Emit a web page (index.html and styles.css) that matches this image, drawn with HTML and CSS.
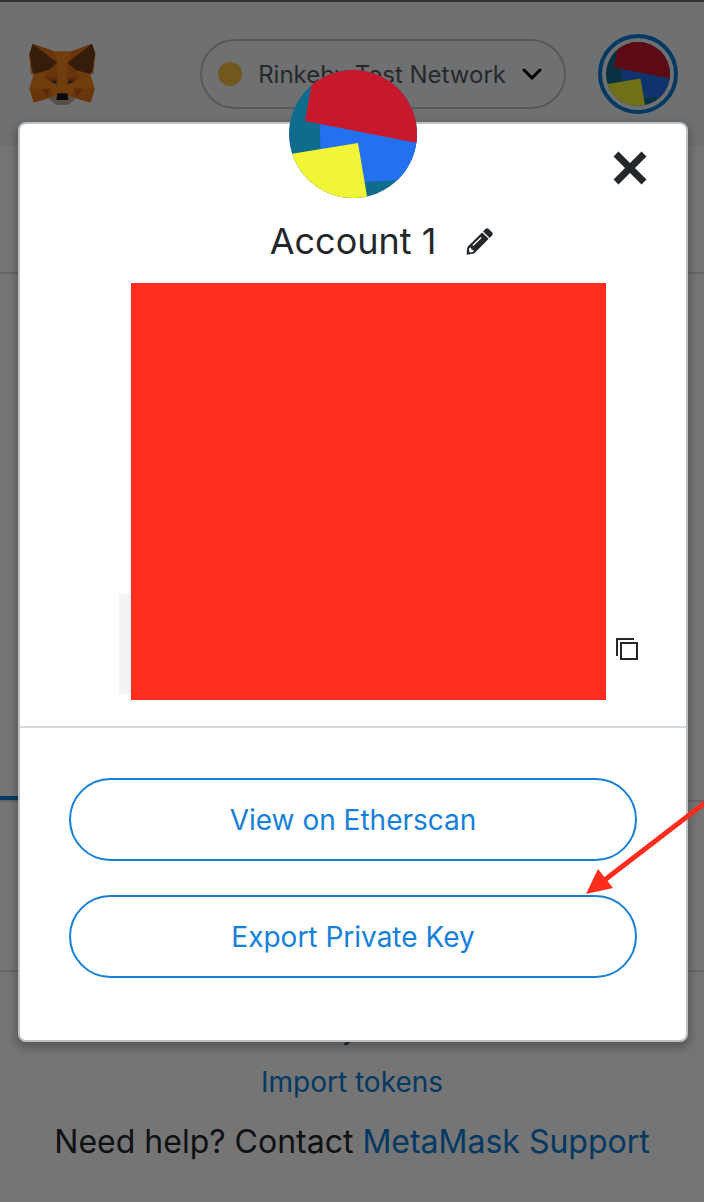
FILE: index.html
```html
<!DOCTYPE html>
<html lang="en">
<head>
<meta charset="utf-8">
<meta name="viewport" content="width=device-width, initial-scale=1">
<title>MetaMask</title>
<link rel="stylesheet" href="styles.css">
</head>
<body>
<svg class="defs" aria-hidden="true">
  <clipPath id="round"><circle cx="64" cy="64" r="64"/></clipPath>
  <symbol id="jazzicon" viewBox="0 0 128 128">
    <g clip-path="url(#round)">
      <path fill="#0e6c8c" d="M0 0h128v128H0z"/>
      <path fill="#2370f0" d="M30 40 128 60v49L33 114z"/>
      <path fill="#c8192c" d="M27-10 16 51l122 24V-10z"/>
      <path fill="#f1f536" d="M-10 86 69 73l11 65H-10z"/>
    </g>
  </symbol>
</svg>

<div class="page">
  <header class="header">
    <svg class="fox" viewBox="88 128 201 189" role="img" aria-label="MetaMask">
      <path fill="#f6851b" d="M99 130 162 153h54l61-23 10 33-6 58-9 1 13 43-12 42-49-14-20 19h-32l-22-19-48 14-13-42 13-43-8-1-6-58z"/>
      <path fill="#e4761b" d="M99 130 162 153l12 34zM277 130 216 153l-13 34zM148 209l26-22-1 46-38-3zM228 209l-25-22 1 46 37-3zM91 265h61l10 20-14 8-45 13zM285 265h-61l-10 20 14 8 45 13z"/>
      <path fill="#763d16" d="M99 130 173 187 148 209 103 221 97 212 99 207 94 203 97 200 93 195 95 190 90 160zM277 130 203 187 228 209 272 221 279 212 277 207 282 203 279 200 283 195 281 190 287 160z"/>
      <path fill="#c45a20" d="M135 230 173 233 175 251 151 243zM241 230 203 233 201 251 225 243zM128 265h24l-8 26zM248 265h-24l8 26z"/>
      <path fill="#233447" d="M155 245l11-5 5 11zM221 245l-11-5-5 11z"/>
      <path fill="#c0ad9e" d="M148 293l24-8h32l24 8-6 8-18 13h-32l-19-13z"/>
      <path fill="#161616" d="M173 279h30l3 20h-36z"/>
    </svg>
    <button class="network" type="button">
      <span class="network-dot"></span>
      <span class="network-name">Rinkeby Test Network</span>
      <svg class="chevron" viewBox="0 0 20 12" aria-hidden="true"><path d="M2 2l8 8 8-8"/></svg>
    </button>
    <button class="account" type="button" aria-label="My accounts"><svg class="account-icon"><use href="#jazzicon"/></svg></button>
  </header>
  <div class="menu-bar"></div>
  <div class="overview"><div class="tab-active"></div></div>
  <div class="token-row"></div>
  <footer class="footer">
    <p class="hint">Don't see your token?</p>
    <a class="import" href="#">Import tokens</a>
    <p class="help">Need help? Contact <a href="#">MetaMask Support</a></p>
  </footer>
</div>

<div class="overlay">
  <div class="modal" role="dialog" aria-modal="true" aria-labelledby="account-name">
    <button class="close" type="button" aria-label="Close"><svg viewBox="0 0 34 34"><path d="M3 3l28 28M31 3 3 31"/></svg></button>
    <svg class="avatar" aria-hidden="true"><use href="#jazzicon"/></svg>
    <div class="title">
      <h1 id="account-name">Account 1</h1>
      <button class="edit" type="button" aria-label="Edit account name">
        <svg viewBox="650 52 82 82">
          <path fill="#24272a" d="M699 66 719 85 677 127Q673 131 666 131L652 133 653 117Q653 111 657 107zM702 63 709 55Q714 51 719 55L729 65Q734 70 729 75L722 82z"/>
          <path fill="none" stroke="#fff" stroke-width="4" d="M671 105 696 81"/>
          <path fill="#fff" d="M660 113l5-2 2 7 6 1-1 5-8 3-5-5z"/>
        </svg>
      </button>
    </div>
    <div class="details">
      <div class="address"></div>
      <div class="redaction"></div>
      <button class="copy" type="button" aria-label="Copy address"><svg viewBox="0 0 22 22"><path d="M1 18V1h17M5 5h16v16H5z"/></svg></button>
    </div>
    <div class="actions">
      <button class="action" type="button">View on Etherscan</button>
      <button class="action" type="button">Export Private Key</button>
    </div>
  </div>
  <svg class="arrow" viewBox="586 798 118 96" aria-hidden="true">
    <path fill="none" stroke="#fc2d1f" stroke-width="5" d="M710 799 602 882"/>
    <path fill="#fc2d1f" d="M586 894l12-25 15 19z"/>
  </svg>
</div>
</body>
</html>
```
FILE: styles.css
```css
* {
  box-sizing: border-box;
}

body {
  margin: 0;
  background: #fff;
  color: #24272a;
  font-family: Inter, "Noto Sans", sans-serif;
}

button {
  padding: 0;
  border: 0;
  background: none;
  color: inherit;
  font: inherit;
  cursor: pointer;
}

button svg {
  display: block;
  width: 100%;
  height: 100%;
}

a {
  color: #037dd6;
  text-decoration: none;
}

h1,
p {
  margin: 0;
}

.defs {
  position: absolute;
  width: 0;
  height: 0;
}

.page {
  min-height: 100vh;
  border-top: 2px solid #6a6b6d;
}

.header {
  display: flex;
  align-items: center;
  gap: 32px;
  height: 144px;
  padding: 0 26px 0 29px;
  background: #f2f4f6;
}

.fox {
  flex: none;
  width: 67px;
  height: 63px;
  margin-right: auto;
}

.network {
  display: flex;
  align-items: center;
  gap: 16px;
  flex: 0 1 365px;
  height: 70px;
  padding: 0 22px 0 16px;
  border: 2px solid #bbc0c5;
  border-radius: 35px;
  color: #535a61;
  font-size: 24px;
}

.network-dot {
  flex: none;
  width: 24px;
  height: 24px;
  border-radius: 50%;
  background: #f6c343;
}

.network-name {
  white-space: nowrap;
}

.network .chevron {
  flex: none;
  width: 20px;
  height: 12px;
  margin-left: auto;
  fill: none;
  stroke: #000;
  stroke-width: 3;
  stroke-linecap: round;
}

.account {
  flex: none;
  width: 80px;
  height: 80px;
  padding: 4px;
  border: 4px solid #037dd6;
  border-radius: 50%;
}

.menu-bar {
  height: 128px;
  border-bottom: 2px solid #d6d9dc;
}

.overview {
  display: flex;
  align-items: flex-end;
  height: 528px;
  border-bottom: 2px solid #d6d9dc;
}

.tab-active {
  width: 50%;
  height: 4px;
  background: #037dd6;
}

.token-row {
  height: 170px;
  border-bottom: 2px solid #d6d9dc;
}

.footer {
  display: flex;
  flex-direction: column;
  align-items: center;
  padding: 37px 16px 32px;
  text-align: center;
}

.hint,
.import {
  font-size: 28px;
  line-height: 40px;
}

.hint {
  color: #535a61;
}

.import {
  margin-top: 13px;
}

.help {
  margin-top: 16px;
  font-size: 32px;
  line-height: 48px;
}

.overlay {
  position: absolute;
  inset: 0;
  min-height: 1202px;
  padding: 122px 16px 0 18px;
  background: rgba(0, 0, 0, 0.54);
}

.modal {
  position: relative;
  border: 2px solid #bbc0c5;
  border-radius: 8px;
  background: #fff;
  box-shadow: 0 4px 8px 2px rgba(0, 0, 0, 0.25);
}

.close {
  position: absolute;
  top: 27px;
  right: 39px;
  width: 34px;
  height: 34px;
}

.close svg {
  fill: none;
  stroke: #24272a;
  stroke-width: 7;
}

.avatar {
  display: block;
  width: 128px;
  height: 128px;
  margin: -54px auto 0;
}

.title {
  display: grid;
  grid-template-columns: 1fr auto 1fr;
  align-items: center;
  column-gap: 30px;
  margin-top: 21px;
}

.title h1 {
  grid-column: 2;
  font-size: 36px;
  font-weight: 400;
  line-height: 44px;
}

.edit {
  width: 27px;
  height: 27px;
}

.details {
  display: flex;
  align-items: flex-end;
  padding: 20px 48px 26px 99px;
  border-bottom: 2px solid #d6d9dc;
}

.address {
  width: 12px;
  height: 100px;
  margin-bottom: 6px;
  background: #f2f3f4;
}

.redaction {
  flex: 1;
  height: 417px;
  background: #fd2d1f;
}

.copy {
  width: 22px;
  height: 22px;
  margin: 0 0 40px 10px;
}

.copy svg {
  fill: none;
  stroke: #24272a;
  stroke-width: 2;
}

.actions {
  display: flex;
  flex-direction: column;
  gap: 34px;
  padding: 50px 49px 62px;
}

.action {
  height: 83px;
  border: 2px solid #1580d8;
  border-radius: 42px;
  color: #1580d8;
  font-size: 28px;
}

.arrow {
  position: absolute;
  top: 798px;
  right: 0;
  width: 118px;
  height: 96px;
  pointer-events: none;
}
```
